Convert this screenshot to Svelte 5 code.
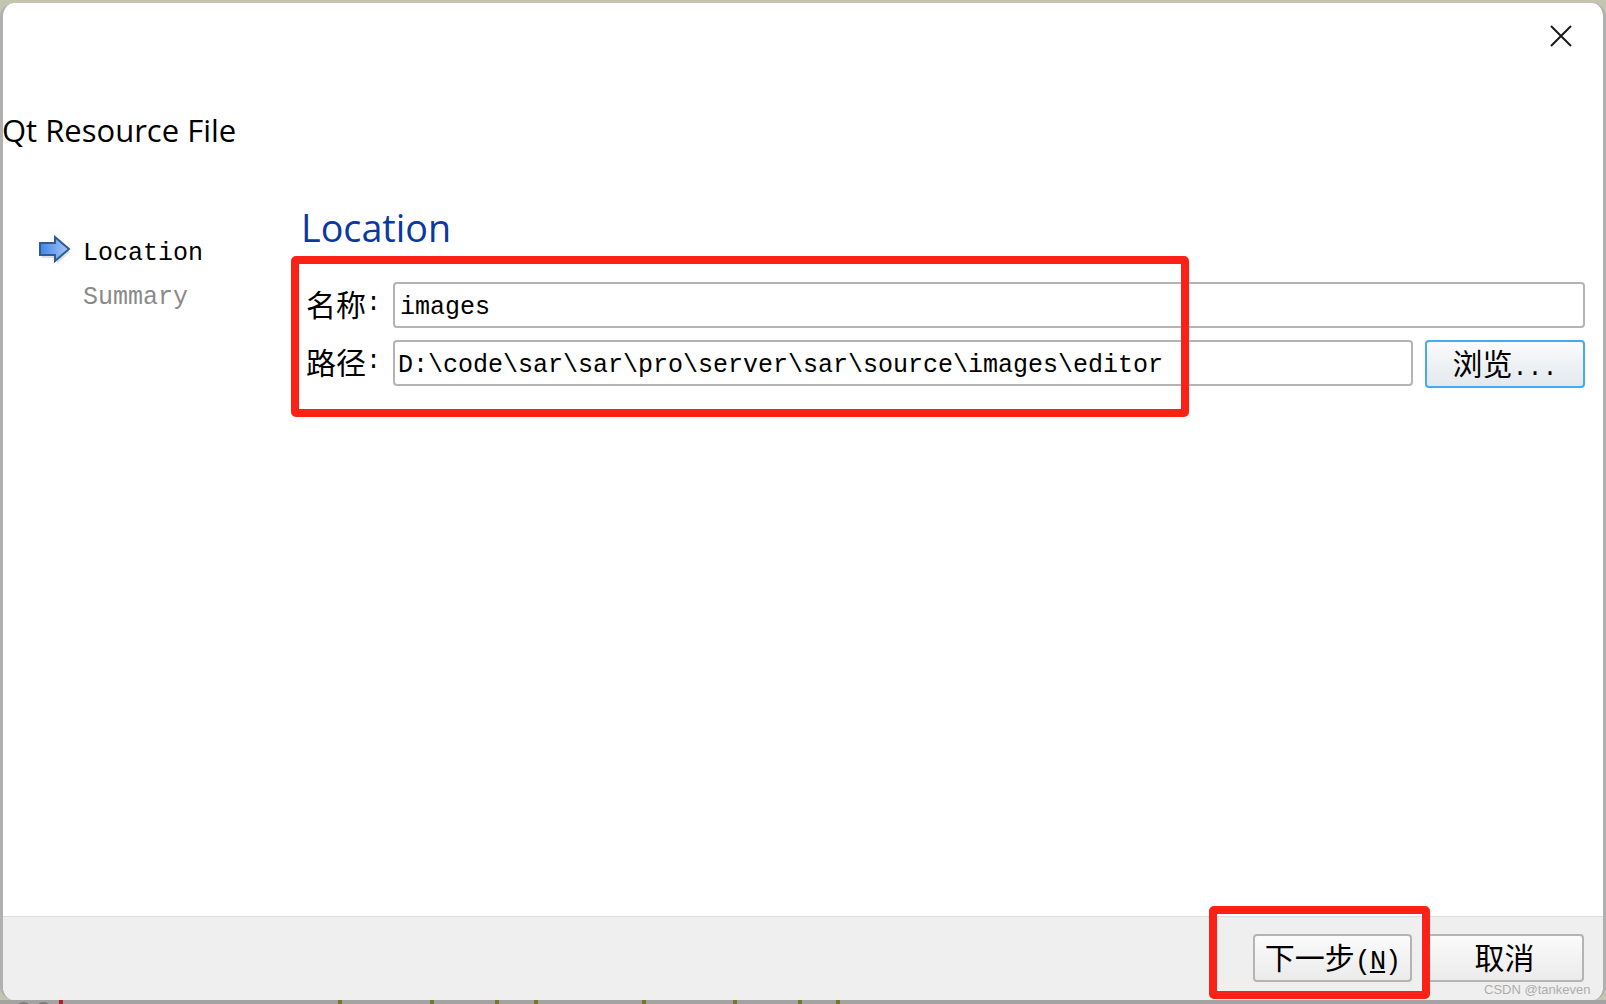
<script lang="ts">
  const steps = [
    { label: "Location", current: true },
    { label: "Summary", current: false },
  ];

  // bits of the window behind, only the tops show under the dialog
  const behind = [
    { x: 59, c: "#b02020" },
    { x: 338, c: "#77772a" },
    { x: 430, c: "#77772a" },
    { x: 495, c: "#77772a" },
    { x: 534, c: "#77772a" },
    { x: 642, c: "#77772a" },
    { x: 733, c: "#77772a" },
    { x: 798, c: "#77772a" },
    { x: 836, c: "#77772a" },
  ];
</script>

<div class="window">
  <div class="dialog">
    <div class="content">
      <div class="close-row">
        <svg class="close" width="22" height="22" viewBox="0 0 22 22" aria-label="close">
          <path d="M1 1 L21 21 M21 1 L1 21" stroke="#1a1a1a" stroke-width="2" fill="none" />
        </svg>
      </div>
      <div class="title">Qt Resource File</div>

      <div class="wizard">
        <div class="steps">
          {#each steps as step}
            <div class="step" class:muted={!step.current}>
              <span class="step-icon">
                {#if step.current}
                  <svg width="34" height="30" viewBox="0 0 34 30">
                    <defs>
                      <linearGradient id="arrow" x1="0" y1="0" x2="1" y2="0">
                        <stop offset="0" stop-color="#3f86ea" />
                        <stop offset="1" stop-color="#a9c8f2" />
                      </linearGradient>
                    </defs>
                    <path d="M3 10 H18 V4 L31 15 L18 27 V21 H3 Z" fill="#000" opacity="0.12" transform="translate(1 2)" />
                    <path d="M2 8 H17 V2 L31 14 L17 26 V20 H2 Z" fill="url(#arrow)" stroke="#2f5c96" stroke-width="2" />
                  </svg>
                {/if}
              </span>
              <span>{step.label}</span>
            </div>
          {/each}
        </div>

        <div class="page">
          <h1>Location</h1>
          <div class="form">
            <span class="label">名称<span class="half">:</span></span>
            <div class="input wide">images</div>
            <span class="label">路径<span class="half">:</span></span>
            <div class="input path">D:\code\sar\sar\pro\server\sar\source\images\editor</div>
            <button class="btn browse">浏览<span class="half">...</span></button>
          </div>
        </div>
      </div>
    </div>

    <div class="footer">
      <button class="btn next">下一步<span class="half tall">(<u>N</u>)</span></button>
      <button class="btn cancel">取消</button>
    </div>
  </div>

  <div class="strip">
    <b class="dot" style="left: 18px"></b>
    <b class="dot" style="left: 38px"></b>
    {#each behind as b}
      <i style="left: {b.x}px; background: {b.c}"></i>
    {/each}
  </div>

  <div class="mark form-mark"></div>
  <div class="mark next-mark"></div>
  <div class="watermark">CSDN @tankeven</div>
</div>

<style>
  :global(body) {
    margin: 0;
    background: #a9a9a9;
  }

  .window {
    position: relative;
    width: 1606px;
    height: 1004px;
    overflow: hidden;
    background: #c4c5ae;
    padding-top: 3px;
    box-sizing: border-box;
    font-family: "Liberation Mono", "Noto Sans CJK SC", monospace;
    color: #000;
  }

  .dialog {
    height: 997px;
    display: flex;
    flex-direction: column;
    background: #fff;
    border-left: 3px solid #b0b0b0;
    border-right: 3px solid #b0b0b0;
    border-radius: 14px;
    overflow: hidden;
    position: relative;
    z-index: 1;
  }

  .content {
    flex: 1;
    display: flex;
    flex-direction: column;
  }

  .close-row {
    display: flex;
    justify-content: flex-end;
    padding: 22px 31px 0 0;
    height: 22px;
  }

  .title {
    margin: 63px 0 0 -1px;
    font-family: "Open Sans", sans-serif;
    font-size: 31px;
    line-height: 40px;
  }

  .wizard {
    display: flex;
    margin-top: 53px;
  }

  .steps {
    width: 299px;
    padding: 28px 0 0 35px;
    box-sizing: border-box;
    flex: none;
  }

  .step {
    display: flex;
    align-items: center;
    gap: 11px;
    height: 44px;
    font-size: 25px;
  }

  .step.muted {
    color: #8a8a8a;
  }

  .step-icon {
    width: 34px;
    height: 30px;
    flex: none;
    margin-top: -6px;
  }

  .page {
    flex: 1;
    padding-right: 18px;
  }

  h1 {
    margin: 0 0 0 -1px;
    font-family: "Open Sans", sans-serif;
    font-weight: 400;
    font-size: 37.7px;
    line-height: 50px;
    color: #0a3aa0;
  }

  .form {
    display: grid;
    grid-template-columns: 91px 1fr 160px;
    row-gap: 12px;
    margin-top: 29px;
    align-items: start;
  }

  .label {
    display: flex;
    align-items: center;
    height: 42px;
    font-family: "Noto Sans CJK SC", sans-serif;
    font-size: 30px;
    padding-left: 4px;
  }

  .half {
    font-family: "Liberation Mono", monospace;
    font-size: 25px;
  }

  .btn .half {
    line-height: 0;
  }

  .half.tall {
    font-size: 27px;
    letter-spacing: -1px;
  }

  .input {
    height: 46px;
    box-sizing: border-box;
    border: 2px solid #b4b4b4;
    border-radius: 4px;
    font-size: 25px;
    line-height: 48px;
    padding-left: 5px;
    white-space: nowrap;
  }

  .input.wide {
    grid-column: 2 / 4;
  }

  .input.path {
    margin-right: 12px;
    padding-left: 3px;
  }

  .btn {
    box-sizing: border-box;
    border: 2px solid #b4b4b4;
    border-radius: 4px;
    background: linear-gradient(#fbfbfb, #ebebeb);
    font-family: "Noto Sans CJK SC", sans-serif;
    font-size: 30px;
    line-height: 30px;
    padding: 0 0 4px;
    color: #000;
  }

  .btn.browse {
    height: 48px;
    border-color: #45aaf2;
    background: linear-gradient(#fafbfc, #e4e9ee);
  }

  .footer {
    height: 84px;
    flex: none;
    display: flex;
    justify-content: flex-end;
    gap: 13px;
    padding: 17px 19px 0 0;
    box-sizing: border-box;
    background: #efefef;
    border-top: 1px solid #dcdcdc;
  }

  .footer .btn {
    width: 159px;
    height: 48px;
  }

  .strip {
    position: absolute;
    left: 0;
    right: 0;
    bottom: 0;
    height: 4px;
    background: #a3a3a3;
  }

  .strip i {
    position: absolute;
    top: 0;
    width: 4px;
    height: 4px;
  }

  .strip .dot {
    position: absolute;
    top: 2px;
    width: 11px;
    height: 6px;
    border-radius: 50%;
    background: #7e7e7e;
  }

  .mark {
    position: absolute;
    z-index: 2;
    box-sizing: border-box;
    border: 8px solid #fb2116;
    border-radius: 5px;
  }

  .form-mark {
    left: 291px;
    top: 256px;
    width: 898px;
    height: 161px;
  }

  .next-mark {
    left: 1209px;
    top: 906px;
    width: 221px;
    height: 93px;
  }

  .watermark {
    position: absolute;
    z-index: 2;
    left: 1484px;
    top: 982px;
    font-family: "Liberation Sans", sans-serif;
    font-size: 13px;
    line-height: 16px;
    color: #adadad;
    white-space: nowrap;
  }
</style>
